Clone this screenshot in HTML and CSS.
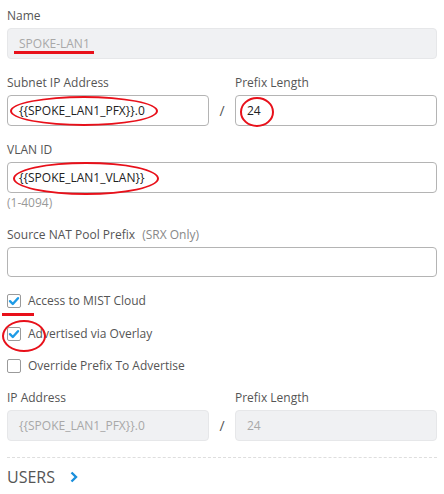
FILE: index.html
```html
<!DOCTYPE html>
<html>
<head>
<meta charset="utf-8">
<link rel="stylesheet" href="styles.css">
</head>
<body>
<div class="form">
  <div class="field f-name">
    <div class="label">Name</div>
    <div class="input disabled">SPOKE-LAN1<span class="mark underline-name"></span></div>
  </div>

  <div class="field f-subnet">
    <div class="pair">
      <div class="label">Subnet IP Address</div>
      <div></div>
      <div class="label">Prefix Length</div>
      <div class="input">{{SPOKE_LAN1_PFX}}.0<span class="mark ell-pfx"></span></div>
      <div class="slash">/</div>
      <div class="input">24<span class="mark circ-24"></span></div>
    </div>
  </div>

  <div class="field f-vlan">
    <div class="label">VLAN ID</div>
    <div class="input">{{SPOKE_LAN1_VLAN}}<span class="mark ell-vlan"></span></div>
    <div class="hint">(1-4094)</div>
  </div>

  <div class="field f-nat">
    <div class="label">Source NAT Pool Prefix <span class="sub">(SRX Only)</span></div>
    <div class="input"></div>
  </div>

  <div class="checks">
    <div class="check">
      <span class="box on"><svg viewBox="0 0 14 14" width="14" height="14"><path d="M3 7.2 L5.8 10 L11 4.2" fill="none" stroke="#1e9be6" stroke-width="2.4" stroke-linecap="round" stroke-linejoin="round"/></svg><span class="mark underline-check"></span></span>
      <span class="ctext">Access to MIST Cloud</span>
    </div>
    <div class="check">
      <span class="box on"><svg viewBox="0 0 14 14" width="14" height="14"><path d="M3 7.2 L5.8 10 L11 4.2" fill="none" stroke="#1e9be6" stroke-width="2.4" stroke-linecap="round" stroke-linejoin="round"/></svg><span class="mark circ-check"></span></span>
      <span class="ctext">Advertised via Overlay</span>
    </div>
    <div class="check">
      <span class="box"></span>
      <span class="ctext">Override Prefix To Advertise</span>
    </div>
  </div>

  <div class="field f-ip">
    <div class="pair">
      <div class="label">IP Address</div>
      <div></div>
      <div class="label">Prefix Length</div>
      <div class="input disabled">{{SPOKE_LAN1_PFX}}.0</div>
      <div class="slash">/</div>
      <div class="input disabled">24</div>
    </div>
  </div>

  <div class="divider"></div>

  <div class="section">
    <span class="section-title">USERS</span>
    <svg class="chev" viewBox="0 0 8 12" width="8" height="12"><path d="M1.5 1.5 L6 6 L1.5 10.5" fill="none" stroke="#1a8fdc" stroke-width="2.4"/></svg>
  </div>
</div>
</body>
</html>
```

FILE: styles.css
```css
html, body {
  margin: 0;
  padding: 0;
  background: #fff;
}
body {
  font-family: "Open Sans", "Liberation Sans", sans-serif;
  font-size: 12px;
  color: #555;
}
.form {
  padding: 8px 7px 0 7px;
  width: 430px;
}
.label {
  line-height: 16px;
  height: 16px;
  margin-bottom: 4px;
  color: #555;
  white-space: nowrap;
}
.label .sub {
  color: #888;
  margin-left: 4px;
}
.input {
  position: relative;
  box-sizing: border-box;
  height: 31px;
  border: 1px solid #b4b4b4;
  border-radius: 4px;
  padding: 0 11px;
  line-height: 29px;
  color: #222;
  background: #fff;
  white-space: nowrap;
}
.input.disabled {
  background: #f0f1f3;
  border-color: #e6e7e9;
  color: #a8a8a8;
}
.pair {
  display: grid;
  grid-template-columns: 202px 26px 202px;
}
.slash {
  text-align: center;
  line-height: 31px;
  font-size: 14px;
  color: #555;
}
.f-subnet { margin-top: 16px; }
.f-vlan { margin-top: 16px; }
.hint {
  line-height: 16px;
  margin-top: 2px;
  color: #999;
}
.f-nat { margin-top: 16px; }
.f-nat .input { height: 30px; }
.checks {
  margin-top: 8px;
}
.check {
  display: flex;
  align-items: center;
  height: 32.5px;
}
.box {
  position: relative;
  box-sizing: border-box;
  width: 14px;
  height: 14px;
  border: 1px solid #9a9a9a;
  border-radius: 2px;
  background: #fff;
  margin-right: 7px;
  flex: none;
}
.box svg {
  position: absolute;
  left: -1px;
  top: -1px;
}
.ctext {
  font-size: 12px;
  color: #555;
  line-height: 16px;
}
.f-ip { margin-top: 7px; }
.divider {
  margin-top: 16px;
  border-top: 1px dashed #dedede;
}
.section {
  display: flex;
  align-items: center;
  height: 40px;
  margin-top: -1px;
}
.section-title {
  font-size: 16px;
  color: #555;
  margin-right: 15px;
}
.chev { display: block; }

/* red annotation marks drawn over the screenshot */
.mark {
  position: absolute;
  pointer-events: none;
}
.underline-name {
  left: 6px;
  top: 22px;
  width: 80px;
  height: 2.5px;
  background: #e8101a;
}
.ell-pfx {
  left: 2px;
  top: 0px;
  width: 148px;
  height: 30px;
  border: 2.5px solid #e8101a;
  border-radius: 50%;
  box-sizing: border-box;
}
.circ-24 {
  left: 4px;
  top: 1px;
  width: 34px;
  height: 30px;
  border: 2.5px solid #e8101a;
  border-radius: 50%;
  box-sizing: border-box;
}
.ell-vlan {
  left: 5px;
  top: -1px;
  width: 146px;
  height: 33px;
  border: 2.5px solid #e8101a;
  border-radius: 50%;
  box-sizing: border-box;
}
.underline-check {
  left: -6px;
  top: 18px;
  width: 32px;
  height: 2.5px;
  background: #e8101a;
}
.circ-check {
  left: -6px;
  top: -8px;
  width: 44px;
  height: 32px;
  border: 2.5px solid #e8101a;
  border-radius: 50%;
  box-sizing: border-box;
}
```
